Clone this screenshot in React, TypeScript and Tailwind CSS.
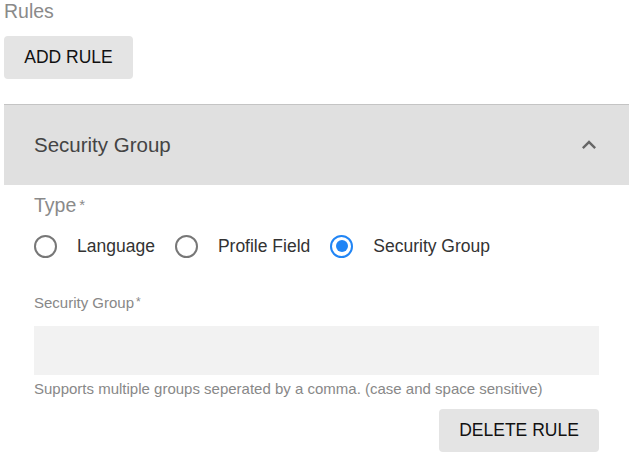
import React from "react";

function Radio({ label, checked }: { label: string; checked?: boolean }) {
    return (
        <label className="flex h-[42px] items-center">
            <span
                className={
                    checked
                        ? "flex h-[23px] w-[23px] items-center justify-center rounded-full border-[2.5px] border-[#2185f5]"
                        : "flex h-[23px] w-[23px] items-center justify-center rounded-full border-[2.5px] border-[#777777]"
                }
            >
                {checked && <span className="h-[12px] w-[12px] rounded-full bg-[#2185f5]" />}
            </span>
            <span className="ml-[20px] text-[17.5px] text-[#333]">{label}</span>
        </label>
    );
}

export default function App() {
    return (
        <div className="w-[633px] h-[459px] bg-white pl-[4px] font-['Liberation_Sans','Arial',sans-serif]">
            {/* Section title */}
            <div className="text-[19.5px] leading-[22px] text-[#8a8a8a]">Rules</div>

            <button className="mt-[14px] h-[43px] w-[129px] rounded-[4px] bg-[#e4e4e4] text-[17.5px] text-[#111]">
                ADD RULE
            </button>

            {/* Rule panel */}
            <div className="mt-[25px] w-[625px]">
                <div className="flex h-[81px] items-center justify-between border-t-[1.5px] border-[#c4c4c4] bg-[#e0e0e0] pl-[30px] pr-[26px]">
                    <span className="text-[20.5px] text-[#444]">Security Group</span>
                    <svg width="28" height="28" viewBox="0 0 24 24">
                        <path d="M12 8l-6 6 1.41 1.41L12 10.83l4.59 4.58L18 14z" fill="#666" />
                    </svg>
                </div>

                <div className="pl-[30px] pr-[30px]">
                    <div className="mt-[8px] text-[19.5px] leading-[24px] text-[#8a8a8a]">
                        Type<span className="ml-[3px] text-[15px] align-top">*</span>
                    </div>
                    <div className="mt-[8px] flex items-center gap-[20px]">
                        <Radio label="Language" />
                        <Radio label="Profile Field" />
                        <Radio label="Security Group" checked />
                    </div>

                    <div className="mt-[27px] text-[15px] leading-[17px] text-[#888]">
                        Security Group<span className="ml-[2px] text-[12px] align-top">*</span>
                    </div>
                    <div className="mt-[15px] h-[49px] w-[565px] bg-[#f2f2f2]" />
                    <div className="mt-[5px] text-[15px] leading-[17px] text-[#888]">
                        Supports multiple groups seperated by a comma. (case and space sensitive)
                    </div>
                    <div className="mt-[12px] flex w-[565px] justify-end">
                        <button className="h-[43px] w-[160px] rounded-[4px] bg-[#e4e4e4] text-[17.5px] text-[#111]">
                            DELETE RULE
                        </button>
                    </div>
                </div>
            </div>
        </div>
    );
}
